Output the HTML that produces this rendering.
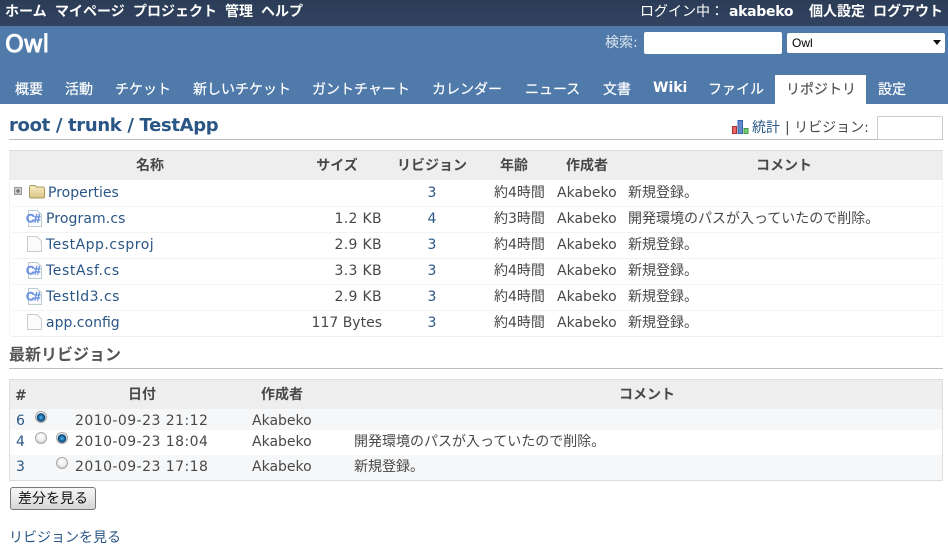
<!DOCTYPE html>
<html lang="ja"><head><meta charset="utf-8"><title>TestApp</title>
<style>
html,body{margin:0;padding:0;background:#fff}
body{width:948px;height:560px;position:relative;overflow:hidden;font:14px/20px "DejaVu Sans","Noto Sans CJK JP",sans-serif;color:#484848}
.t{position:absolute;white-space:nowrap;line-height:20px;margin-top:1px}
.b{position:absolute;display:block}
.w{color:#fff}
.tab{-webkit-text-stroke:.2px #fff}
.l{color:#2a5685}
.h{font-weight:bold;color:#484848;text-align:center}
.r{text-align:right}
.c{text-align:center}
.d{letter-spacing:.45px}
.s{letter-spacing:.33px}
svg{position:absolute;display:block}
.radio{position:absolute;width:10px;height:10px;border-radius:50%;border:1px solid #a8a8a8;background:radial-gradient(circle at 50% 35%,#fff 0,#eee 50%,#bbb 100%);box-sizing:content-box}
.radio.on{background:radial-gradient(circle at 50% 55%,#5fb4e6 0,#156aa8 35%,#0b3a66 52%,#f4f4f4 62%,#e4e4e4 100%)}
</style></head><body>
<div class="b" style="left:0;top:0;width:948px;height:26px;background:linear-gradient(#2b3c57,#31435f)"></div>
<div class="b" style="left:0;top:26px;width:948px;height:78px;background:#507aaa"></div>

<span class="t w" style="left:5px;top:1px;font-weight:bold">ホーム</span>
<span class="t w" style="left:55px;top:1px;font-weight:bold">マイページ</span>
<span class="t w" style="left:133px;top:1px;font-weight:bold">プロジェクト</span>
<span class="t w" style="left:225px;top:1px;font-weight:bold">管理</span>
<span class="t w" style="left:261px;top:1px;font-weight:bold">ヘルプ</span>
<span class="t w" style="left:640px;top:1px">ログイン中：</span>
<span class="t w" style="left:729px;top:1px;font-weight:bold;letter-spacing:-.3px">akabeko</span>
<span class="t w" style="left:809px;top:1px;font-weight:bold">個人設定</span>
<span class="t w" style="left:873px;top:1px;font-weight:bold">ログアウト</span>

<span class="t w" style="left:5px;top:30px;font-size:24px;line-height:26px;font-family:'DejaVu Sans',sans-serif;-webkit-text-stroke:.9px #fff;letter-spacing:-.5px">Owl</span>
<span class="t" style="left:605px;top:32px;color:#dbe4ee">検索:</span>
<div class="b" style="left:644px;top:32px;width:138px;height:22px;background:#fff;border-radius:2px"></div>
<div class="b" style="left:787px;top:33px;width:158px;height:20px;background:#fff;border-radius:2px"></div>
<span class="t" style="left:792px;top:32px;color:#000;font-size:12px;font-family:'Liberation Sans',sans-serif;">Owl</span>
<svg style="left:933px;top:40px" width="8" height="5"><path d="M0 0H8L4 5Z" fill="#111"/></svg>

<div class="b" style="left:775px;top:75px;width:91px;height:29px;background:#fff"></div>
<span class="t w tab" style="left:15px;top:79px">概要</span>
<span class="t w tab" style="left:65px;top:79px">活動</span>
<span class="t w tab" style="left:115px;top:79px">チケット</span>
<span class="t w tab" style="left:193px;top:79px">新しいチケット</span>
<span class="t w tab" style="left:312px;top:79px">ガントチャート</span>
<span class="t w tab" style="left:432px;top:79px">カレンダー</span>
<span class="t w tab" style="left:525px;top:79px">ニュース</span>
<span class="t w tab" style="left:603px;top:79px">文書</span>
<span class="t w" style="left:653px;top:77px;font-weight:bold">Wiki</span>
<span class="t w tab" style="left:708px;top:79px">ファイル</span>
<span class="t" style="left:786px;top:79px;color:#555;-webkit-text-stroke:.2px #555">リポジトリ</span>
<span class="t w tab" style="left:878px;top:79px">設定</span>

<span class="t" style="left:9px;top:113px;font-size:18px;line-height:24px;font-weight:bold;color:#2a5685;letter-spacing:-.33px">root / trunk / TestApp</span>
<div class="b" style="left:9px;top:139px;width:934px;height:1px;background:#bbb"></div>
<svg style="left:732px;top:120px" width="17" height="14"><rect x=".5" y="6.5" width="4" height="7" fill="#e66" stroke="#a33"/><rect x="6" y=".5" width="4.5" height="13" fill="#68c" stroke="#36a"/><rect x="12" y="8.5" width="4" height="5" fill="#7c7" stroke="#494"/></svg>
<span class="t l" style="left:752px;top:117px">統計</span>
<span class="t" style="left:785px;top:117px">| リビジョン:</span>
<div class="b" style="left:877px;top:116px;width:64px;height:22px;border:1px solid #ccc;border-radius:2px"></div>

<!-- table 1 -->
<div class="b" style="left:9px;top:150px;width:934px;height:30px;background:#eee;border-top:1px solid #ddd;box-sizing:border-box"></div>
<div class="b" style="left:9px;top:180px;width:1px;height:157px;background:#f4f4f4"></div>
<div class="b" style="left:942px;top:180px;width:1px;height:157px;background:#f4f4f4"></div>
<div class="b" style="left:12px;top:206px;width:930px;height:1px;background:#f3f3f3"></div>
<div class="b" style="left:12px;top:232px;width:930px;height:1px;background:#f3f3f3"></div>
<div class="b" style="left:12px;top:258px;width:930px;height:1px;background:#f3f3f3"></div>
<div class="b" style="left:12px;top:284px;width:930px;height:1px;background:#f3f3f3"></div>
<div class="b" style="left:12px;top:310px;width:930px;height:1px;background:#f3f3f3"></div>
<div class="b" style="left:12px;top:336px;width:930px;height:1px;background:#eee"></div>

<span class="t h" style="left:100px;top:155px;width:100px">名称</span>
<span class="t h" style="left:297px;top:155px;width:80px">サイズ</span>
<span class="t h" style="left:382px;top:155px;width:100px">リビジョン</span>
<span class="t h" style="left:484px;top:155px;width:60px">年齢</span>
<span class="t h" style="left:547px;top:155px;width:80px">作成者</span>
<span class="t h" style="left:724px;top:155px;width:120px">コメント</span>

<svg style="left:14px;top:187px" width="8" height="8"><rect x=".5" y=".5" width="7" height="7" fill="#ccc" stroke="#999"/><path d="M2 4H6M4 2V6" stroke="#555"/></svg>
<svg style="left:29px;top:184px" width="16" height="15"><defs><linearGradient id="f" x1="0" y1="0" x2="0" y2="1"><stop offset="0" stop-color="#f8efc8"/><stop offset="1" stop-color="#d9c582"/></linearGradient></defs><path d="M.5 3.500Q.5 1.500 2 1.500H6L7.500 3H14Q15.500 3 15.500 5V12.500Q15.500 14 14 14H2Q.5 14 .5 12.500Z" fill="url(#f)" stroke="#a8985e"/></svg>

<svg style="left:26px;top:210px" width="16" height="17"><path d="M2.500.5H11L15.500 4.500V16.500H2.500Z" fill="#fbfbff" stroke="#bcc"/><text x="0" y="12.500" font-family="Liberation Sans" font-weight="bold" font-size="12" letter-spacing="-.8" fill="#6a92e0" stroke="#6a92e0" stroke-width=".4">C#</text></svg>
<svg style="left:27px;top:236px" width="15" height="16"><path d="M.5.5H10L14.500 5V15.500H.5Z" fill="#fbfbfb" stroke="#ccc"/></svg>
<svg style="left:26px;top:262px" width="16" height="17"><path d="M2.500.5H11L15.500 4.500V16.500H2.500Z" fill="#fbfbff" stroke="#bcc"/><text x="0" y="12.500" font-family="Liberation Sans" font-weight="bold" font-size="12" letter-spacing="-.8" fill="#6a92e0" stroke="#6a92e0" stroke-width=".4">C#</text></svg>
<svg style="left:26px;top:288px" width="16" height="17"><path d="M2.500.5H11L15.500 4.500V16.500H2.500Z" fill="#fbfbff" stroke="#bcc"/><text x="0" y="12.500" font-family="Liberation Sans" font-weight="bold" font-size="12" letter-spacing="-.8" fill="#6a92e0" stroke="#6a92e0" stroke-width=".4">C#</text></svg>
<svg style="left:27px;top:314px" width="15" height="16"><path d="M.5.5H10L14.500 5V15.500H.5Z" fill="#fbfbfb" stroke="#ccc"/></svg>

<span class="t l" style="left:48px;top:182px">Properties</span>
<span class="t l" style="left:46px;top:208px;letter-spacing:.1px">Program.cs</span>
<span class="t l" style="left:46px;top:234px;letter-spacing:.5px">TestApp.csproj</span>
<span class="t l" style="left:46px;top:260px;letter-spacing:.6px">TestAsf.cs</span>
<span class="t l" style="left:46px;top:286px;letter-spacing:.5px">TestId3.cs</span>
<span class="t l" style="left:46px;top:312px">app.config</span>

<span class="t r s" style="left:282px;top:208px;width:100px">1.2 KB</span>
<span class="t r s" style="left:282px;top:234px;width:100px">2.9 KB</span>
<span class="t r s" style="left:282px;top:260px;width:100px">3.3 KB</span>
<span class="t r s" style="left:282px;top:286px;width:100px">2.9 KB</span>
<span class="t r" style="left:282px;top:312px;width:100px">117 Bytes</span>

<span class="t l c" style="left:412px;top:182px;width:40px">3</span>
<span class="t l c" style="left:412px;top:208px;width:40px">4</span>
<span class="t l c" style="left:412px;top:234px;width:40px">3</span>
<span class="t l c" style="left:412px;top:260px;width:40px">3</span>
<span class="t l c" style="left:412px;top:286px;width:40px">3</span>
<span class="t l c" style="left:412px;top:312px;width:40px">3</span>

<span class="t" style="left:494px;top:182px">約4時間</span>
<span class="t" style="left:494px;top:208px">約3時間</span>
<span class="t" style="left:494px;top:234px">約4時間</span>
<span class="t" style="left:494px;top:260px">約4時間</span>
<span class="t" style="left:494px;top:286px">約4時間</span>
<span class="t" style="left:494px;top:312px">約4時間</span>

<span class="t" style="left:557px;top:182px">Akabeko</span>
<span class="t" style="left:557px;top:208px">Akabeko</span>
<span class="t" style="left:557px;top:234px">Akabeko</span>
<span class="t" style="left:557px;top:260px">Akabeko</span>
<span class="t" style="left:557px;top:286px">Akabeko</span>
<span class="t" style="left:557px;top:312px">Akabeko</span>

<span class="t" style="left:628px;top:182px">新規登録。</span>
<span class="t" style="left:628px;top:208px">開発環境のパスが入っていたので削除。</span>
<span class="t" style="left:628px;top:234px">新規登録。</span>
<span class="t" style="left:628px;top:260px">新規登録。</span>
<span class="t" style="left:628px;top:286px">新規登録。</span>
<span class="t" style="left:628px;top:312px">新規登録。</span>

<span class="t" style="left:9px;top:344px;font-size:16px;font-weight:bold;color:#555">最新リビジョン</span>
<div class="b" style="left:9px;top:368px;width:934px;height:1px;background:#bbb"></div>

<!-- table 2 -->
<div class="b" style="left:9px;top:379px;width:934px;height:102px;border:1px solid #ddd;box-sizing:border-box;background:#fff"></div>
<div class="b" style="left:10px;top:380px;width:932px;height:29px;background:#eee"></div>
<div class="b" style="left:10px;top:409px;width:932px;height:21px;background:#f6f7f8"></div>
<div class="b" style="left:10px;top:455px;width:932px;height:25px;background:#f6f7f8"></div>

<span class="t h" style="left:15px;top:385px;letter-spacing:-.5px">#</span>
<span class="t h" style="left:112px;top:384px;width:60px">日付</span>
<span class="t h" style="left:242px;top:384px;width:80px">作成者</span>
<span class="t h" style="left:587px;top:384px;width:120px">コメント</span>

<span class="t l" style="left:16px;top:410px">6</span>
<span class="t l" style="left:16px;top:431px">4</span>
<span class="t l" style="left:16px;top:456px">3</span>

<div class="radio on" style="left:35px;top:411px"></div>
<div class="radio" style="left:35px;top:432px"></div>
<div class="radio on" style="left:56px;top:432px"></div>
<div class="radio" style="left:56px;top:457px"></div>

<span class="t d" style="left:75px;top:410px">2010-09-23 21:12</span>
<span class="t d" style="left:75px;top:431px">2010-09-23 18:04</span>
<span class="t d" style="left:75px;top:456px">2010-09-23 17:18</span>
<span class="t" style="left:252px;top:410px">Akabeko</span>
<span class="t" style="left:252px;top:431px">Akabeko</span>
<span class="t" style="left:252px;top:456px">Akabeko</span>
<span class="t" style="left:354px;top:431px">開発環境のパスが入っていたので削除。</span>
<span class="t" style="left:354px;top:456px">新規登録。</span>

<div class="b" style="left:10px;top:487px;width:86px;height:23px;border:1px solid #777;border-radius:3px;box-sizing:border-box;background:linear-gradient(#f6f6f6,#e8e8e8 50%,#d4d4d4)"></div>
<span class="t c" style="left:10px;top:488px;width:86px;color:#111">差分を見る</span>
<span class="t l" style="left:9px;top:527px">リビジョンを見る</span>
</body></html>
